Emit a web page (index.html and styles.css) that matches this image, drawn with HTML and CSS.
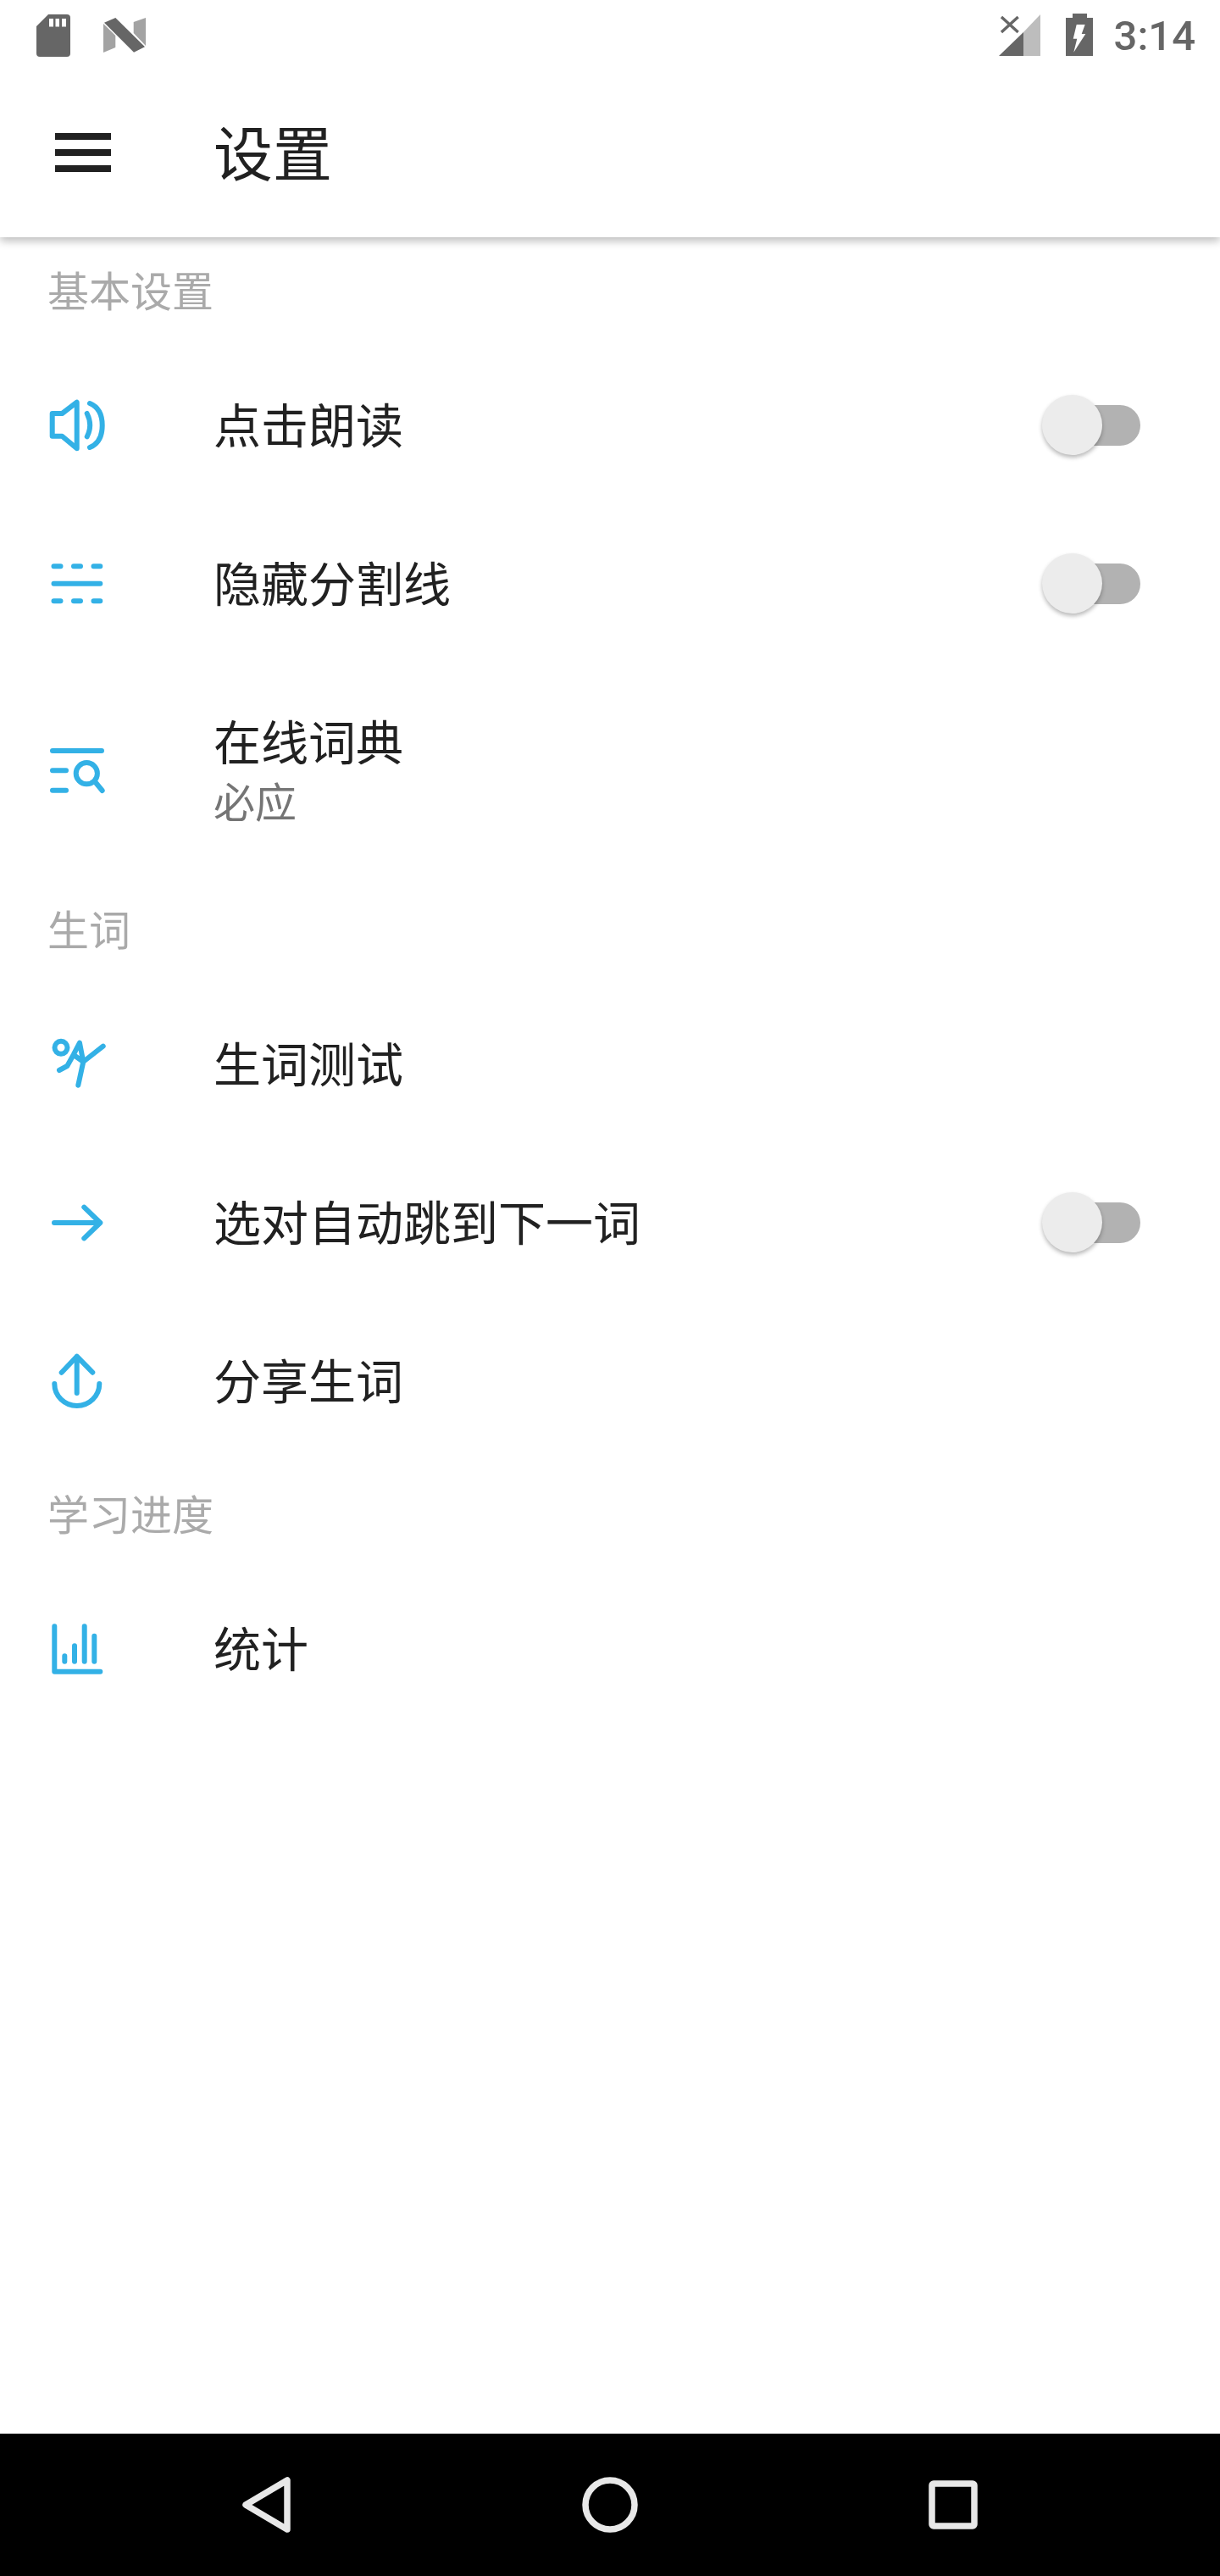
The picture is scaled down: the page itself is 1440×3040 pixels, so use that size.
FILE: index.html
```html
<!DOCTYPE html>
<html lang="zh-CN">
<head>
<meta charset="utf-8">
<title>设置</title>
<link rel="stylesheet" href="styles.css">
</head>
<body>
<div class="screen">
  <header class="appbar">
    <div class="statusbar">
      <div class="status-left">
        <svg class="sb-sd" width="40" height="50" viewBox="0 0 40 50"><path fill="#666" fill-rule="evenodd" d="M14 0H36a4 4 0 0 1 4 4V46a4 4 0 0 1-4 4H4a4 4 0 0 1-4-4V14ZM15 5V14.5H20V5ZM22.5 5V14.5H27V5ZM30 5V14.5H35V5Z"/></svg>
        <svg class="sb-n" width="50" height="41" viewBox="0 0 50 41"><path fill="#a3a3a3" d="M0 7 14.3 21V35L0 41ZM35.7 5 50 0V33L35.7 18Z"/><path fill="#666" d="M1 5.7 14.3 0 49 34.3 36 40.7Z"/></svg>
      </div>
      <div class="status-right">
        <svg class="sb-signal" width="50" height="50" viewBox="0 0 50 50"><path fill="#bdbdbd" d="M29 21 49 0V49H29Z"/><path fill="#666" d="M0 49 29 21V49Z"/><path stroke="#666" stroke-width="3.4" fill="none" d="M3 3 22.7 21M22.7 3 3 21"/></svg>
        <svg class="sb-batt" width="32" height="50" viewBox="0 0 32 50"><path fill="#666" d="M8 0H25V5H32V50H0V5H8Z"/><path fill="#fff" d="M12.7 13H22.7L18.7 24H23.3L9.3 45.7 13.3 29.7H8.7Z"/></svg>
        <span class="clock">3:14</span>
      </div>
    </div>
    <div class="toolbar">
      <div class="menu-icon"><span></span><span></span><span></span></div>
      <h1 class="title">设置</h1>
    </div>
  </header>

  <main class="content">
    <h2 class="section first">基本设置</h2>
    <div class="row">
      <svg class="ic" viewBox="0 0 72 72"><path d="M5.7 22H17.3L34.7 8.7V63.3L17.3 48.7H5.7Z"/><path d="M46.7 22Q53.7 36 46.7 49.3"/><path d="M50 10Q64.7 16 64.7 36T50 62"/></svg>
      <div class="label">点击朗读</div>
      <div class="switch"><span class="knob"></span></div>
    </div>
    <div class="row">
      <svg class="ic" viewBox="0 0 72 72"><path d="M7.5 15.3H15.5M31 15.3H39M54.5 15.3H62.3M7.5 35.7H62.3M7.5 56.3H15.5M31 56.3H39M54.5 56.3H62.3"/></svg>
      <div class="label">隐藏分割线</div>
      <div class="switch"><span class="knob"></span></div>
    </div>
    <div class="row row-tall">
      <svg class="ic" viewBox="0 0 72 72"><path d="M6 14H64M6 37.3H22M6 60.7H22"/><circle cx="46.3" cy="40.7" r="12.6"/><path d="M55.7 50 64.7 61"/></svg>
      <div class="label-stack">
        <div class="label">在线词典</div>
        <div class="sub">必应</div>
      </div>
    </div>

    <h2 class="section">生词</h2>
    <div class="row">
      <svg class="ic" viewBox="0 0 72 72"><circle cx="16" cy="16.3" r="7.5"/><path d="M14 43 23.3 38 30.7 24.7 38 10.7 42.3 33 65.7 14.7M30.7 24.7 42.3 33 36.3 60.7"/></svg>
      <div class="label">生词测试</div>
    </div>
    <div class="row">
      <svg class="ic" viewBox="0 0 72 72"><path d="M8 36H62.3M43.3 17.7 62.3 36 43.3 54.3"/></svg>
      <div class="label">选对自动跳到下一词</div>
      <div class="switch"><span class="knob"></span></div>
    </div>
    <div class="row">
      <svg class="ic" viewBox="0 0 72 72"><path d="M16.7 25.7 34.7 6.7 53.3 25.7M34.7 6.7V50M8.3 39A26.5 26 0 0 0 61.3 39"/></svg>
      <div class="label">分享生词</div>
    </div>

    <h2 class="section">学习进度</h2>
    <div class="row">
      <svg class="ic" viewBox="0 0 72 72"><path d="M8.3 9.3V62.7H62.3M20.3 50.7V44.3M32 50.7V32.3M43.7 50.7V9.3M55.3 50.7V20.7"/></svg>
      <div class="label">统计</div>
    </div>
  </main>

  <nav class="navbar">
    <div class="nav-btn"><svg width="58" height="66" viewBox="0 0 58 66"><path d="M53 4V62L4 33Z" class="nav-stroke"/></svg></div>
    <div class="nav-btn"><svg width="66" height="66" viewBox="0 0 66 66"><circle cx="33" cy="33" r="29" class="nav-stroke"/></svg></div>
    <div class="nav-btn"><svg width="58" height="58" viewBox="0 0 58 58"><rect x="4" y="4" width="50" height="50" rx="2" class="nav-stroke"/></svg></div>
  </nav>
</div>
</body>
</html>
```
FILE: styles.css
```css
* { box-sizing: border-box; }
html, body { margin: 0; padding: 0; background: #fff; }
body { font-family: "Noto Sans CJK SC", "Noto Sans", sans-serif; }

.screen {
  width: 1440px;
  height: 3040px;
  display: flex;
  flex-direction: column;
  overflow: hidden;
}

/* App bar: status bar plus toolbar */
.appbar {
  height: 280px;
  flex: none;
  background: #fff;
  position: relative;
  z-index: 1;
  box-shadow: 0 4px 10px rgba(0, 0, 0, 0.28);
}
.statusbar {
  height: 84px;
  display: flex;
  justify-content: space-between;
  align-items: flex-start;
  padding: 17px 29px 0 43px;
}
.status-left { display: flex; align-items: flex-start; gap: 39px; }
.sb-n { margin-top: 4px; }
.status-right { display: flex; align-items: flex-start; }
.sb-batt { margin-left: 29px; margin-top: -1px; }
.clock {
  margin-left: 25px;
  font-family: Roboto, sans-serif;
  font-weight: 500;
  font-size: 49px;
  line-height: 58px;
  color: #666;
  margin-top: -3px;
}
.toolbar {
  height: 196px;
  display: flex;
  align-items: center;
  padding-left: 65px;
}
.menu-icon {
  width: 66px;
  height: 46px;
  display: flex;
  flex-direction: column;
  justify-content: space-between;
  margin-top: -4px;
}
.menu-icon span { display: block; height: 8px; background: #212121; }
.title {
  margin: -8px 0 0 121px;
  font-size: 70px;
  font-weight: 400;
  line-height: 96px;
  color: #212121;
}

/* Settings list */
.content { flex: 1; }
.section {
  margin: 30px 0 35px;
  padding-left: 56px;
  font-size: 49px;
  font-weight: 400;
  line-height: 64px;
  height: 64px;
  color: #aaa;
}
.section.first { margin-top: 29px; margin-bottom: 35px; }
.row {
  display: flex;
  align-items: center;
  height: 187px;
  padding-left: 56px;
  padding-right: 94px;
}
.row-tall { height: 251px; margin-bottom: 6px; }
.ic {
  width: 72px;
  height: 72px;
  flex: none;
  fill: none;
  stroke: #33b1e6;
  stroke-width: 6;
  stroke-linecap: round;
  stroke-linejoin: round;
}
.label, .sub { white-space: nowrap; }
.label {
  margin-left: 124px;
  font-size: 56px;
  line-height: 78px;
  color: #212121;
}
/* Text sits slightly above the row's centre line */
.row > .label, .label-stack { margin-bottom: 6px; }
.label-stack { display: flex; flex-direction: column; }
.sub {
  margin-left: 124px;
  font-size: 49px;
  line-height: 64px;
  color: #757575;
}

/* Off-state toggle */
.switch {
  margin-left: auto;
  width: 94px;
  height: 48px;
  border-radius: 24px;
  background: #b2b2b2;
  position: relative;
}
.knob {
  position: absolute;
  left: -22px;
  top: -12px;
  width: 71px;
  height: 71px;
  border-radius: 50%;
  background: #ececec;
  box-shadow: 0 3px 5px rgba(0, 0, 0, 0.28);
}

/* System navigation */
.navbar {
  height: 168px;
  flex: none;
  background: #000;
  display: grid;
  grid-template-columns: repeat(3, 405px);
  justify-content: center;
  align-items: center;
}
.nav-btn { display: flex; justify-content: center; align-items: center; }
.nav-stroke { fill: none; stroke: #e8e8e8; stroke-width: 7.5; stroke-linejoin: round; }
```
